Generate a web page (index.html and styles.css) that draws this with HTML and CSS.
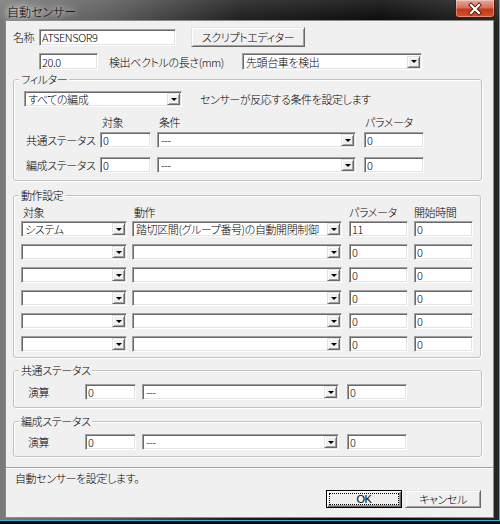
FILE: index.html
```html
<!DOCTYPE html>
<html lang="ja">
<head>
    <meta charset="UTF-8">
    <title>自動センサー</title>
    <link rel="stylesheet" href="styles.css">
</head>
<body>
    <div class="window">
        <div class="titlebar">
            <span class="title">自動センサー</span>
            <div class="close">
                <svg width="38" height="16" viewBox="0 0 38 16">
                    <path d="M15 4 L23 12 M23 4 L15 12" stroke="#5a1408" stroke-width="4" stroke-linecap="square"/>
                    <path d="M15 4 L23 12 M23 4 L15 12" stroke="#fff" stroke-width="2.2" stroke-linecap="square"/>
                </svg>
            </div>
        </div>

        <div class="client">
            <div class="content">
                <div class="row name-row">
                    <span class="name-lbl">名称</span>
                    <input class="tb w-name" type="text" value="ATSENSOR9">
                    <button class="btn btn-script">スクリプトエディター</button>
                </div>

                <div class="row len-row">
                    <input class="tb w-len" type="text" value="20.0">
                    <span class="len-lbl">検出ベクトルの長さ(mm)</span>
                    <div class="combo w-mode"><span>先頭台車を検出</span><i class="drop"></i></div>
                </div>

                <!-- フィルター -->
                <div class="group filter">
                    <span class="legend">フィルター</span>
                    <div class="row">
                        <div class="combo w-target"><span>すべての編成</span><i class="drop"></i></div>
                        <span class="hint">センサーが反応する条件を設定します</span>
                    </div>
                    <div class="row heads">
                        <span class="f-lbl"></span>
                        <span class="f-obj">対象</span>
                        <span class="f-cond">条件</span>
                        <span class="f-par">パラメータ</span>
                    </div>
                    <div class="row f-row">
                        <span class="f-lbl">共通ステータス</span>
                        <input class="tb f-obj" type="text" value="0">
                        <div class="combo f-cond"><span>---</span><i class="drop"></i></div>
                        <input class="tb f-par" type="text" value="0">
                    </div>
                    <div class="row f-row second">
                        <span class="f-lbl">編成ステータス</span>
                        <input class="tb f-obj" type="text" value="0">
                        <div class="combo f-cond"><span>---</span><i class="drop"></i></div>
                        <input class="tb f-par" type="text" value="0">
                    </div>
                </div>

                <!-- 動作設定 -->
                <div class="group actions">
                    <span class="legend">動作設定</span>
                    <div class="row heads a-heads">
                        <span class="a-obj">対象</span>
                        <span class="a-act">動作</span>
                        <span class="a-par">パラメータ</span>
                        <span class="a-time">開始時間</span>
                    </div>
                    <div class="a-rows">
                        <div class="row">
                            <div class="combo a-obj"><span>システム</span><i class="drop"></i></div>
                            <div class="combo a-act"><span>踏切区間(グループ番号)の自動開閉制御</span><i class="drop"></i></div>
                            <input class="tb a-par" type="text" value="11">
                            <input class="tb a-time" type="text" value="0">
                        </div>
                        <div class="row">
                            <div class="combo a-obj"><span></span><i class="drop"></i></div>
                            <div class="combo a-act"><span></span><i class="drop"></i></div>
                            <input class="tb a-par" type="text" value="0">
                            <input class="tb a-time" type="text" value="0">
                        </div>
                        <div class="row">
                            <div class="combo a-obj"><span></span><i class="drop"></i></div>
                            <div class="combo a-act"><span></span><i class="drop"></i></div>
                            <input class="tb a-par" type="text" value="0">
                            <input class="tb a-time" type="text" value="0">
                        </div>
                        <div class="row">
                            <div class="combo a-obj"><span></span><i class="drop"></i></div>
                            <div class="combo a-act"><span></span><i class="drop"></i></div>
                            <input class="tb a-par" type="text" value="0">
                            <input class="tb a-time" type="text" value="0">
                        </div>
                        <div class="row">
                            <div class="combo a-obj"><span></span><i class="drop"></i></div>
                            <div class="combo a-act"><span></span><i class="drop"></i></div>
                            <input class="tb a-par" type="text" value="0">
                            <input class="tb a-time" type="text" value="0">
                        </div>
                        <div class="row">
                            <div class="combo a-obj"><span></span><i class="drop"></i></div>
                            <div class="combo a-act"><span></span><i class="drop"></i></div>
                            <input class="tb a-par" type="text" value="0">
                            <input class="tb a-time" type="text" value="0">
                        </div>
                    </div>
                </div>

                <!-- 共通ステータス -->
                <div class="group status common">
                    <span class="legend">共通ステータス</span>
                    <div class="row">
                        <span class="s-lbl">演算</span>
                        <input class="tb s-obj" type="text" value="0">
                        <div class="combo s-op"><span>---</span><i class="drop"></i></div>
                        <input class="tb s-par" type="text" value="0">
                    </div>
                </div>

                <!-- 編成ステータス -->
                <div class="group status formation">
                    <span class="legend">編成ステータス</span>
                    <div class="row">
                        <span class="s-lbl">演算</span>
                        <input class="tb s-obj" type="text" value="0">
                        <div class="combo s-op"><span>---</span><i class="drop"></i></div>
                        <input class="tb s-par" type="text" value="0">
                    </div>
                </div>
            </div>

            <div class="separator"></div>

            <div class="footer">
                <div class="status-text">自動センサーを設定します。</div>
                <div class="buttons">
                    <button class="btn btn-ok">OK</button>
                    <button class="btn btn-cancel">キャンセル</button>
                </div>
            </div>
        </div>
    </div>
</body>
</html>
```

FILE: styles.css
```css
* {
    box-sizing: border-box;
}

body {
    margin: 0;
    background: #000;
    font-family: "Noto Sans CJK JP", sans-serif;
    font-size: 11px;
    font-weight: 300;
    letter-spacing: -0.4px;
    font-feature-settings: "palt";
    color: #000;
}

.window {
    width: 500px;
    height: 524px;
    display: flex;
    flex-direction: column;
    background:
        linear-gradient(180deg, rgba(255,255,255,0.12), rgba(255,255,255,0) 22px),
        linear-gradient(90deg, #7a7a7a 0, #5a5a5a 110px, #1e1e1e 240px, #0a0a0a 380px, #262626 100%);
    box-shadow: inset 0 -3px 0 #0a0a0a, inset 0 -4px 0 #3cb6ca, inset -1px 0 0 #3cb6ca;
}

.titlebar {
    height: 21px;
    display: flex;
    justify-content: space-between;
    align-items: flex-start;
}

.title {
    margin: 5px 0 0 7px;
    font-size: 12px;
    line-height: 14px;
    letter-spacing: 0;
    color: #000;
    text-shadow: 0 0 6px #fff, 0 0 8px rgba(255,255,255,0.8), 0 0 10px rgba(255,255,255,0.6);
}

.close {
    width: 40px;
    height: 18px;
    margin-right: 5px;
    border: 1px solid #4a1a12;
    border-top: none;
    border-radius: 0 0 4px 4px;
    background: linear-gradient(180deg, #e8a899 0, #d8705a 45%, #c23a1c 55%, #d6512c 100%);
    box-shadow: inset 0 0 0 1px rgba(255,255,255,0.35);
    display: flex;
    align-items: center;
    justify-content: center;
}

.client {
    flex: 1;
    margin: 0 7px 7px 6px;
    background: #f0f0f0;
    box-shadow: 0 0 0 1px #8a8a8a;
    display: flex;
    flex-direction: column;
}

.content {
    padding: 6px 0 0 7px;
}

.row {
    display: flex;
    align-items: center;
}

/* controls */

.tb {
    height: 16px;
    margin: 0;
    padding: 0 0 0 2px;
    background: #fff;
    border: 1px solid;
    border-color: #a0a0a0 #fff #fff #a0a0a0;
    box-shadow: inset 1px 1px #696969, inset -1px -1px #e3e3e3;
    font: inherit;
    letter-spacing: inherit;
    line-height: 12px;
    color: #000;
    outline: none;
}

.combo {
    height: 16px;
    display: flex;
    align-items: center;
    justify-content: space-between;
    padding: 1px 1px 1px 3px;
    background: #fff;
    border: 1px solid;
    border-color: #a0a0a0 #fff #fff #a0a0a0;
    box-shadow: inset 1px 1px #696969, inset -1px -1px #e3e3e3;
}

.combo span {
    white-space: nowrap;
    line-height: 14px;
}

.drop {
    flex: none;
    width: 13px;
    height: 12px;
    margin-left: 2px;
    background: #f0f0f0;
    border: 1px solid;
    border-color: #e3e3e3 #696969 #696969 #e3e3e3;
    box-shadow: inset 1px 1px #fff, inset -1px -1px #a0a0a0;
    display: flex;
    align-items: center;
    justify-content: center;
}

.drop::after {
    content: "";
    border-left: 3px solid transparent;
    border-right: 3px solid transparent;
    border-top: 3px solid #000;
}

.btn {
    margin: 0;
    padding: 0;
    font: inherit;
    letter-spacing: inherit;
    color: #000;
    background: #f0f0f0;
    border: 1px solid;
    border-color: #e3e3e3 #696969 #696969 #e3e3e3;
    box-shadow: inset 1px 1px #fff, inset -1px -1px #a0a0a0;
}

/* top rows */

.name-row {
    height: 20px;
}

.name-lbl {
    width: 26px;
}

.w-name {
    width: 137px;
    height: 17px;
}

.btn-script {
    width: 114px;
    height: 20px;
    margin-left: 15px;
}

.len-row {
    height: 17px;
    margin-top: 6px;
}

.w-len {
    width: 59px;
    height: 17px;
    margin-left: 26px;
}

.len-lbl {
    width: 133px;
    margin-left: 11px;
}

.w-mode {
    width: 180px;
    height: 17px;
}

/* group boxes */

.group {
    position: relative;
    border: 1px solid #c2c2c2;
    border-radius: 3px;
    box-shadow: inset 1px 1px #fff, 1px 1px #fff;
}

.legend {
    position: absolute;
    top: -8px;
    left: 5px;
    padding: 0 2px;
    background: #f0f0f0;
    line-height: 14px;
}

.heads {
    height: 14px;
    line-height: 14px;
}

.filter {
    width: 469px;
    margin-top: 9px;
    padding: 11px 0 7px 10px;
}

.w-target {
    width: 158px;
}

.hint {
    margin-left: 18px;
}

.filter .heads {
    margin-top: 8px;
}

.f-row {
    margin-top: 3px;
}

.f-row.second {
    margin-top: 9px;
}

.f-lbl {
    width: 76px;
    padding-left: 2px;
}

.f-obj {
    width: 51px;
}

.f-cond {
    width: 199px;
    margin-left: 6px;
}

.f-par {
    width: 60px;
    margin-left: 8px;
}

.heads .f-obj,
.heads .f-cond {
    padding-left: 2px;
}

.heads .f-par {
    padding-left: 1px;
}

.actions {
    width: 468px;
    margin-top: 14px;
    padding: 9px 0 5px 7px;
}

.a-rows {
    display: flex;
    flex-direction: column;
    gap: 7px;
    margin-top: 2px;
}

.a-obj {
    width: 106px;
}

.a-act {
    width: 210px;
    margin-left: 5px;
}

.a-par {
    width: 59px;
    margin-left: 7px;
}

.a-time {
    width: 59px;
    margin-left: 6px;
}

.a-heads .a-obj,
.a-heads .a-act {
    padding-left: 2px;
}

.status {
    width: 469px;
    padding: 13px 0 7px 14px;
}

.common {
    margin-top: 12px;
}

.formation {
    margin-top: 13px;
    padding: 12px 0 6px 14px;
}

.s-lbl {
    width: 57px;
}

.s-obj {
    width: 51px;
}

.s-op {
    width: 197px;
    margin-left: 6px;
}

.s-par {
    width: 60px;
    margin-left: 8px;
}

/* bottom */

.separator {
    margin-top: 10px;
    border-top: 1px solid #a0a0a0;
    border-bottom: 1px solid #fff;
}

.footer {
    padding: 2px 12px 0 9px;
}

.status-text {
    line-height: 14px;
}

.buttons {
    display: flex;
    justify-content: flex-end;
    gap: 3px;
    margin-top: 5px;
}

.btn-ok,
.btn-cancel {
    width: 76px;
    height: 18px;
    line-height: 14px;
}

.btn-ok {
    border-color: #000;
    box-shadow: inset 1px 1px #fff, inset -1px -1px #696969, inset -2px -2px #a0a0a0;
    outline: 1px dotted #000;
    outline-offset: -4px;
    font-family: "Liberation Sans", "Noto Sans CJK JP", sans-serif;
}
```
